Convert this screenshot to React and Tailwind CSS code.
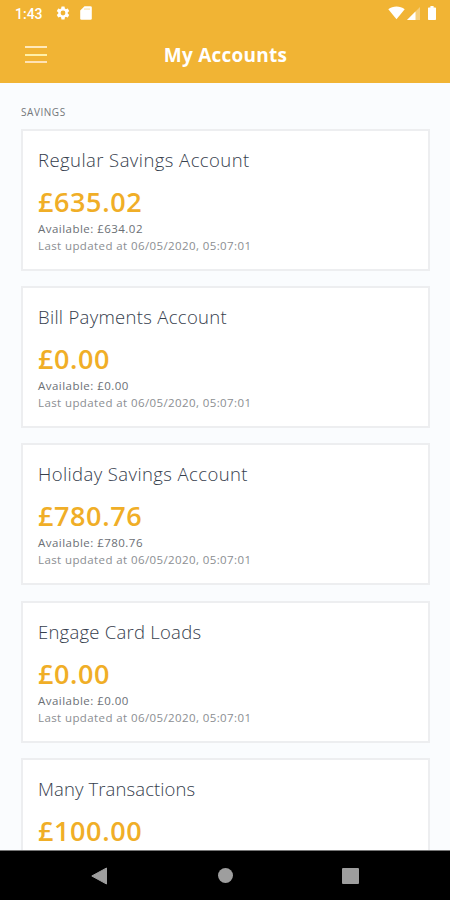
import React from "react";

const accounts = [
  { name: "Regular Savings Account", balance: "£635.02", available: "£634.02", updated: "06/05/2020, 05:07:01", nameTracking: "tracking-[0.43px]" },
  { name: "Bill Payments Account", balance: "£0.00", available: "£0.00", updated: "06/05/2020, 05:07:01", nameTracking: "tracking-[0.3px]" },
  { name: "Holiday Savings Account", balance: "£780.76", available: "£780.76", updated: "06/05/2020, 05:07:01", nameTracking: "tracking-[0.4px]" },
  { name: "Engage Card Loads", balance: "£0.00", available: "£0.00", updated: "06/05/2020, 05:07:01", nameTracking: "tracking-[0.24px]" },
  { name: "Many Transactions", balance: "£100.00", nameTracking: "tracking-[0.1px]" },
];

function StatusBar() {
  return (
    <div className="flex h-[26px] items-center pl-[15px] pr-[14px] text-white">
      <span className="w-[40px] pt-px font-[Roboto,sans-serif] text-[14px] font-medium leading-none">
        1:43
      </span>
      <svg className="h-[16px] w-[16px] shrink-0" viewBox="0 0 24 24" fill="currentColor">
        <path d="M19.14 12.94a7 7 0 0 0 0-1.88l2.03-1.58a.5.5 0 0 0 .12-.61l-1.92-3.32a.5.5 0 0 0-.59-.22l-2.39.96a7 7 0 0 0-1.62-.94l-.36-2.54a.5.5 0 0 0-.48-.41h-3.84a.5.5 0 0 0-.47.41l-.36 2.54a7 7 0 0 0-1.62.94l-2.39-.96a.5.5 0 0 0-.59.22L2.74 8.87a.5.5 0 0 0 .12.61l2.03 1.58a7 7 0 0 0 0 1.88l-2.03 1.58a.5.5 0 0 0-.12.61l1.92 3.32c.12.22.37.29.59.22l2.39-.96c.5.38 1.03.7 1.62.94l.36 2.54c.05.24.24.41.48.41h3.84c.24 0 .44-.17.47-.41l.36-2.54a7 7 0 0 0 1.62-.94l2.39.96c.22.08.47 0 .59-.22l1.92-3.32a.5.5 0 0 0-.12-.61zM12 15.6a3.6 3.6 0 1 1 0-7.2 3.6 3.6 0 0 1 0 7.2z" />
      </svg>
      <svg className="ml-[9px] h-[14px] w-[12px] shrink-0" viewBox="0 0 12 14" fill="currentColor">
        <path d="M4.5.3h6a1.3 1.3 0 0 1 1.3 1.3v10.8a1.3 1.3 0 0 1-1.3 1.3h-9a1.3 1.3 0 0 1-1.3-1.3V4.600z" />
        <path d="M4.500 2.300h1v1.700h-1zM6.500 2.300h1v1.700h-1zM8.500 2.300h1v1.700h-1z" fill="#f8d68e" />
      </svg>
      <svg className="ml-auto h-[14px] w-[17px] shrink-0" viewBox="0 0 17 14" fill="currentColor">
        <path d="M8.5 13.3L.3 3.2C2.6 1.4 5.4.4 8.5.4s5.900 1 8.200 2.800z" />
      </svg>
      <svg className="ml-[2px] h-[13px] w-[13px] shrink-0" viewBox="0 0 13 13" fill="currentColor">
        <path d="M0 13L13 0v13z" opacity="0.35" />
        <path d="M0 13L8.500 4.500V13z" />
      </svg>
      <svg className="ml-[8px] h-[14px] w-[8px] shrink-0" viewBox="0 0 8 14" fill="currentColor">
        <path d="M2.400 0h3.200v1.500h1.700q.7 0 .7.700v11.100q0 .7-.7.700H.7q-.7 0-.7-.7V2.200q0-.7.7-.7h1.700z" />
      </svg>
    </div>
  );
}

function Header() {
  return (
    <header className="h-[83px] shrink-0 bg-[#f1b434]">
      <StatusBar />
      <div className="grid h-[57px] grid-cols-[1fr_auto_1fr] items-center">
        <button className="ml-[25px] flex w-[22px] flex-col gap-[5.5px]" aria-label="Menu">
          <span className="h-[2px] bg-[#ffe9bb]" />
          <span className="h-[2px] bg-[#fff0a8]" />
          <span className="h-[2px] bg-[#ffe2b5]" />
        </button>
        <h1 className="pl-px pt-[2px] text-[19px] font-bold leading-none tracking-[0.25px] text-white">
          My Accounts
        </h1>
      </div>
    </header>
  );
}

function AccountCard({ account }) {
  return (
    <div className="h-[142px] shrink-0 border-2 border-[#edeef0] bg-white px-[15px] pt-[15px]">
      <h2 className={`whitespace-nowrap text-[18.5px] font-[350] leading-[27px] text-[#36404d] ${account.nameTracking}`}>
        {account.name}
      </h2>
      <p className="mt-[13px] text-[27px] font-semibold leading-[32px] tracking-[0.6px] text-[#f0ae27]">
        {account.balance}
      </p>
      {account.available && (
        <p className="mt-[2px] text-[11.5px] leading-[17px] tracking-[0.47px] text-[#6b6f75]">
          Available: {account.available}
        </p>
      )}
      {account.updated && (
        <p className="whitespace-nowrap text-[11.5px] leading-[18px] tracking-[0.4px] text-[#8b8e92]">
          Last updated at {account.updated}
        </p>
      )}
    </div>
  );
}

function NavigationBar() {
  return (
    <nav className="grid h-[50px] shrink-0 grid-cols-[199px_52px_199px] items-center border-t border-[#777] bg-black text-[#9e9e9e]">
      <svg className="ml-[91px] h-[18px] w-[17px]" viewBox="0 0 17 18" fill="currentColor">
        <path d="M.8 9L15.500 1v16z" stroke="currentColor" strokeLinejoin="round" />
      </svg>
      <span className="h-[15px] w-[15px] justify-self-center rounded-full bg-[#9e9e9e]" />
      <span className="ml-[91px] h-[16px] w-[17px] rounded-[1px] bg-[#9e9e9e]" />
    </nav>
  );
}

export default function App() {
  return (
    <div className="flex h-[900px] w-[450px] flex-col overflow-hidden bg-[#fafcfe] font-['Open_Sans',sans-serif]">
      <Header />
      <main className="min-h-0 flex-1 overflow-hidden pl-[21px] pr-[20px] pt-[22px]">
        <p className="h-[23.6px] text-[10px] leading-[14px] tracking-[0.55px] text-[#74777b]">SAVINGS</p>
        <div className="flex flex-col gap-[15.4px]">
          {accounts.map((account) => (
            <AccountCard key={account.name} account={account} />
          ))}
        </div>
      </main>
      <NavigationBar />
    </div>
  );
}
